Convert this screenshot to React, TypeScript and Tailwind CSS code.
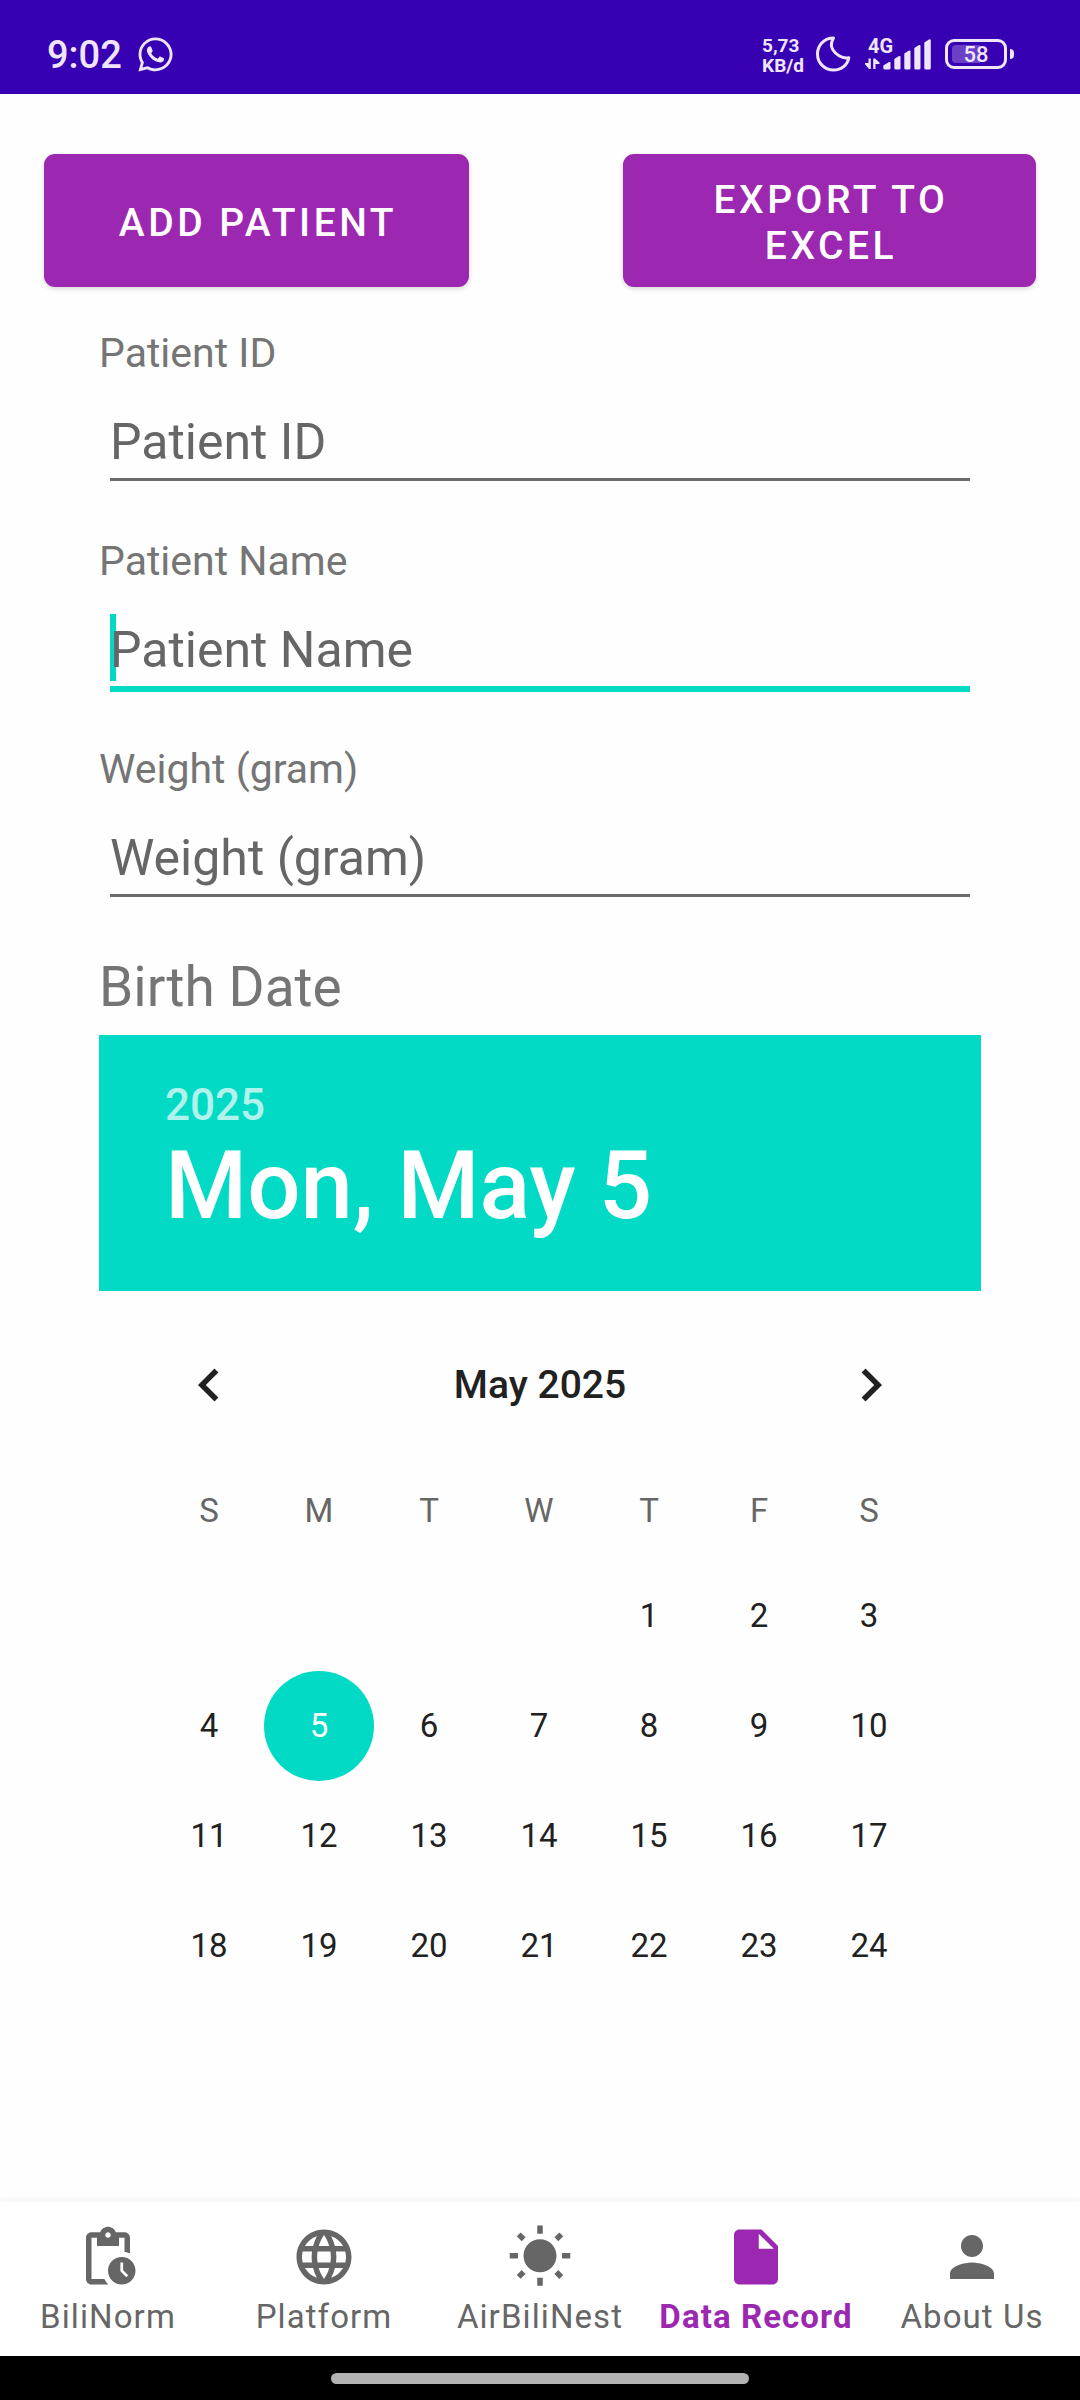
import type { ReactNode } from "react";
import { FaWhatsapp } from "react-icons/fa";
import {
  MdChevronLeft,
  MdChevronRight,
  MdInsertDriveFile,
  MdLanguage,
  MdPendingActions,
  MdPerson,
  MdWbSunny,
} from "react-icons/md";

function SignalIcon() {
  return (
    <svg width="68" height="36" viewBox="0 0 68 36" fill="currentColor" aria-hidden="true">
      <path d="M4.500 22.500 H6.800 V33 H5 L1 28.200 V27 H4.500 Z" />
      <path d="M9.200 22.500 H11 L15.500 26.500 V28 H11.500 V33 H9.200 Z" />
      <path d="M19.300 29.500 L25 26 Q26.500 25.500 26.500 27 V32 Q26.500 33.500 25 33.500 H20.800 Q19.300 33.500 19.300 32 Z" />
      <path d="M30.300 23 L35 20 Q36.500 19.500 36.500 21 V32 Q36.500 33.500 35 33.500 H31.800 Q30.300 33.500 30.300 32 Z" />
      <path d="M40.300 17.500 L45 14.500 Q46.500 14 46.500 15.500 V32 Q46.500 33.500 45 33.500 H41.800 Q40.300 33.500 40.300 32 Z" />
      <path d="M50.300 12 L55 9 Q56.500 8.500 56.500 10 V32 Q56.500 33.500 55 33.500 H51.800 Q50.300 33.500 50.300 32 Z" />
      <path d="M60.300 6.500 L65 3.500 Q66.800 2.800 66.800 4.500 V32 Q66.800 33.500 65.300 33.500 H61.800 Q60.300 33.500 60.300 32 Z" />
    </svg>
  );
}

function MoonIcon() {
  return (
    <svg width="36" height="36" viewBox="0 0 36 36" fill="none" stroke="currentColor" strokeWidth="3" strokeLinejoin="round" aria-hidden="true">
      <path d="M18.500 2 C9 2 2.500 9.500 2.500 18 C2.500 27 9.500 34 18.500 34 C26.500 34 32.500 29 33.800 21.700 C26 23.500 11 14 18.500 2 Z" />
    </svg>
  );
}

function StatusBar() {
  return (
    <header className="flex h-[94px] shrink-0 items-center justify-between bg-[#3700b3] pr-[66px] pl-[47px] pt-[14px] text-[#efe6fb]">
      <div className="flex items-center gap-[14px]">
        <span className="pt-[2px] text-[38px] leading-[44px] font-medium">9:02</span>
        <FaWhatsapp className="size-[39px]" aria-label="WhatsApp" />
      </div>
      <div className="flex items-center">
        <div className="pt-[4px] text-[19px] leading-[20px] font-bold">
          <div>5,73</div>
          <div>KB/d</div>
        </div>
        <div className="ml-[11px]">
          <MoonIcon />
        </div>
        <div className="relative ml-[13px]">
          <SignalIcon />
          <span className="absolute top-px left-[4px] text-[20px] leading-[18px] font-bold">4G</span>
        </div>
        <div className="ml-[13px] flex items-center gap-[3px]">
          <div className="relative flex h-[30px] w-[62px] items-center justify-center rounded-[9px] border-3 border-current">
            <div className="absolute top-[3px] left-[4px] h-[18px] w-[28px] rounded-l-[4px] bg-white/25" />
            <span className="relative pt-[2px] text-[22px] leading-[24px] font-medium">58</span>
          </div>
          <div className="h-[10px] w-[4px] rounded-r-sm bg-current" />
        </div>
      </div>
    </header>
  );
}

function ActionButton({ children }: { children: ReactNode }) {
  return (
    <button
      type="button"
      className="h-[133px] rounded-[11px] bg-[#9c27b0] pt-[4px] pr-[44px] pl-[47px] text-center text-[39px] leading-[46px] font-medium tracking-[0.09em] text-white uppercase shadow-[0_2px_5px_rgba(0,0,0,0.15)]"
    >
      {children}
    </button>
  );
}

function Field({ id, label, active = false }: { id: string; label: string; active?: boolean }) {
  return (
    <div>
      <label htmlFor={id} className="block text-[41px] leading-[48px] text-[#757575]">
        {label}
      </label>
      <div className="relative mx-[11px] mt-[29px] h-[78px]">
        {active && <span className="absolute top-0 left-0 h-[67px] w-[6px] bg-[#03dac5]" />}
        <input
          id={id}
          type="text"
          placeholder={label}
          className={
            active
              ? "relative block h-[78px] w-full border-b-6 border-[#03dac5] bg-transparent text-[50px] leading-[72px] text-[#212121] caret-transparent outline-none placeholder:text-[#666666]"
              : "relative block h-[75px] w-full border-b-3 border-[#6b6b6b] bg-transparent text-[50px] leading-[72px] text-[#212121] outline-none placeholder:text-[#666666]"
          }
        />
      </div>
    </div>
  );
}

const weekdays = ["S", "M", "T", "W", "T", "F", "S"];
const weeks: (number | null)[][] = [
  [null, null, null, null, 1, 2, 3],
  [4, 5, 6, 7, 8, 9, 10],
  [11, 12, 13, 14, 15, 16, 17],
  [18, 19, 20, 21, 22, 23, 24],
];
const selectedDay = 5;

function DatePicker() {
  return (
    <section aria-labelledby="birth-date">
      <h2 id="birth-date" className="text-[55px] leading-[64px] text-[#757575]">
        Birth Date
      </h2>
      <div className="mt-4 flex flex-col items-start bg-[#03dac5] px-[66px] pt-[44px] pb-[50px] font-medium text-white">
        <button type="button" className="text-[44px] leading-[52px] text-white/70">
          2025
        </button>
        <div className="text-[94px] leading-[110px]">Mon, May 5</div>
      </div>
      <div className="mt-[39px] flex h-[110px] items-center justify-between px-[77px] text-[#212121]">
        <button type="button" aria-label="Previous month">
          <MdChevronLeft className="size-[66px]" />
        </button>
        <span className="text-[39px] leading-[46px] font-medium">May 2025</span>
        <button type="button" aria-label="Next month">
          <MdChevronRight className="size-[66px]" />
        </button>
      </div>
      <div className="mt-[20px] pr-[57px] pl-[55px]">
        <table className="w-full table-fixed text-center text-[33px] leading-[40px] text-[#212121]">
          <thead>
            <tr className="h-[101px] text-[#666666]">
              {weekdays.map((day, i) => (
                <th key={i} scope="col" className="p-0 font-normal">
                  {day}
                </th>
              ))}
            </tr>
          </thead>
          <tbody>
            {weeks.map((week, w) => (
              <tr key={w} className="h-[110px]">
                {week.map((day, d) => (
                  <td key={d} className="p-0">
                    {day !== null && (
                      <button
                        type="button"
                        aria-pressed={day === selectedDay}
                        className={
                          day === selectedDay
                            ? "mx-auto block size-[110px] rounded-full bg-[#03dac5] text-white"
                            : "mx-auto block size-[110px] rounded-full"
                        }
                      >
                        {day}
                      </button>
                    )}
                  </td>
                ))}
              </tr>
            ))}
          </tbody>
        </table>
      </div>
    </section>
  );
}

const tabs = [
  { label: "BiliNorm", Icon: MdPendingActions },
  { label: "Platform", Icon: MdLanguage },
  { label: "AirBiliNest", Icon: MdWbSunny },
  { label: "Data Record", Icon: MdInsertDriveFile, current: true },
  { label: "About Us", Icon: MdPerson },
];

function BottomNav() {
  return (
    <nav className="grid h-[154px] shrink-0 grid-cols-5 bg-white shadow-[0_0_8px_rgba(0,0,0,0.08)]">
      {tabs.map(({ label, Icon, current }) => (
        <a
          key={label}
          href="#"
          aria-current={current ? "page" : undefined}
          className={
            current
              ? "flex flex-col items-center gap-2 pt-[22px] font-bold text-[#9c27b0]"
              : "flex flex-col items-center gap-2 pt-[22px] text-[#666666]"
          }
        >
          <Icon className="size-[66px]" aria-hidden="true" />
          <span className="text-[33px] leading-[38px] tracking-[0.033em] whitespace-nowrap">{label}</span>
        </a>
      ))}
    </nav>
  );
}

export default function App() {
  return (
    <div className="flex min-h-screen flex-col bg-[#fefefe] font-['Roboto',sans-serif]">
      <StatusBar />
      <main className="flex-1">
        <div className="grid grid-cols-[425fr_413fr] gap-[154px] px-[44px] pt-[60px]">
          <ActionButton>Add Patient</ActionButton>
          <ActionButton>Export to Excel</ActionButton>
        </div>
        <div className="px-[99px]">
          <form className="mt-[42px] mb-[55px] flex flex-col gap-[53px]">
            <Field id="patient-id" label="Patient ID" />
            <Field id="patient-name" label="Patient Name" active />
            <Field id="weight" label="Weight (gram)" />
          </form>
          <DatePicker />
        </div>
      </main>
      <BottomNav />
      <footer className="flex h-[44px] shrink-0 items-center justify-center bg-black">
        <div className="h-[11px] w-[418px] rounded-full bg-[#b3b3b3]" />
      </footer>
    </div>
  );
}
